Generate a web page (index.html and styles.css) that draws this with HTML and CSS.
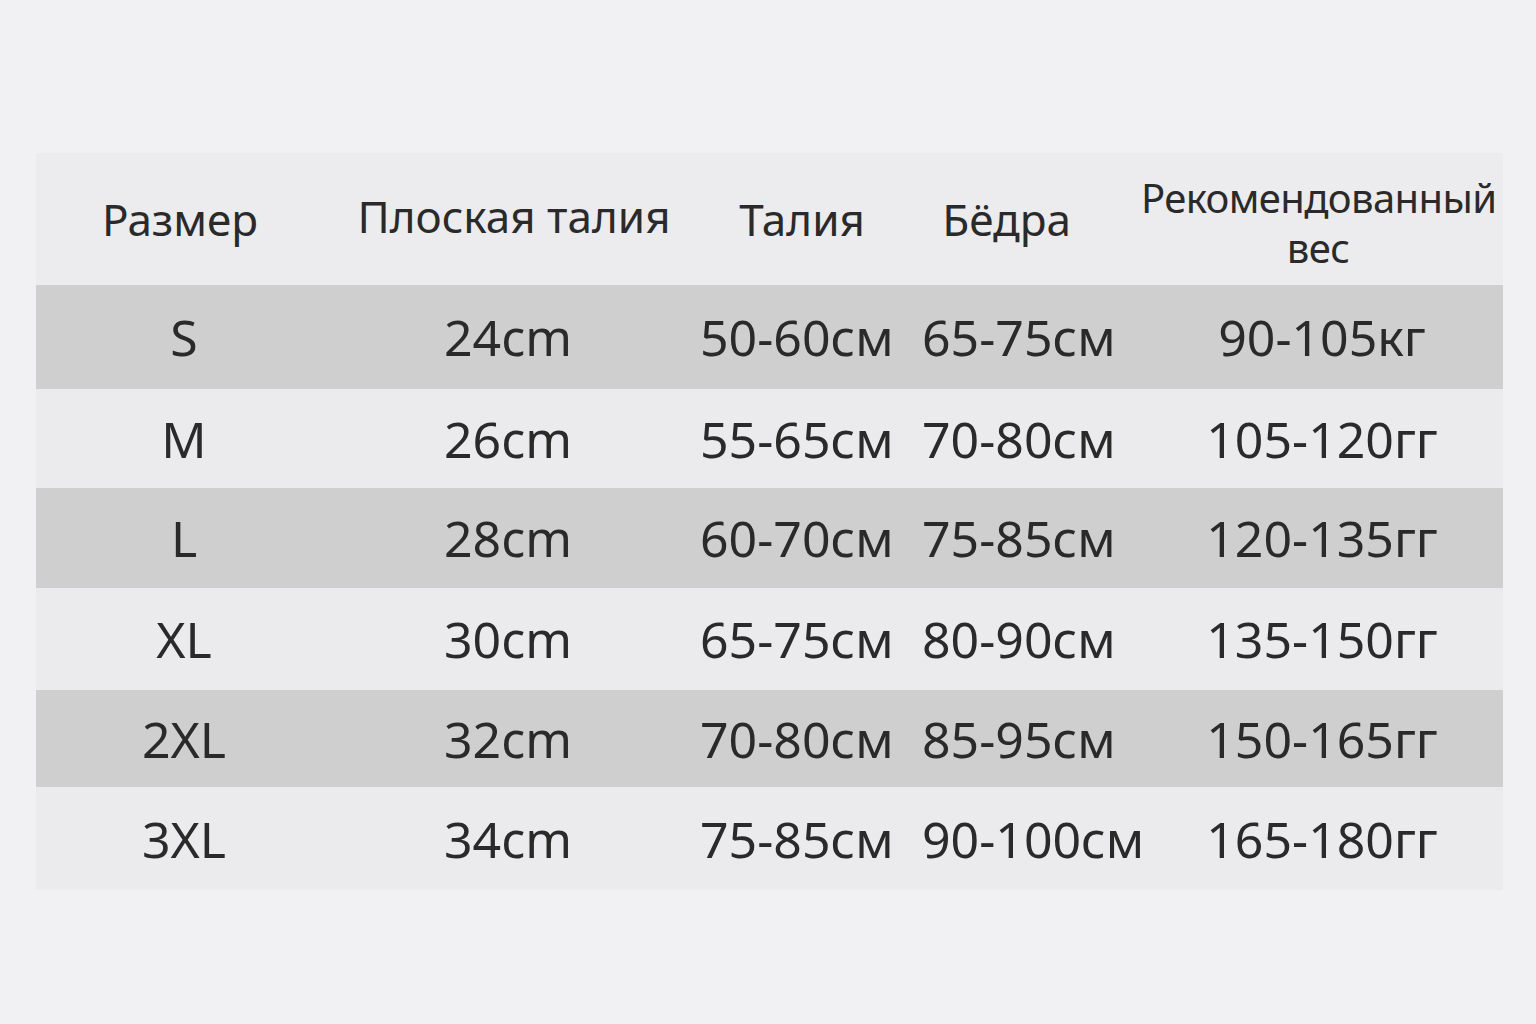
FILE: index.html
```html
<!DOCTYPE html>
<html lang="ru">
<head>
<meta charset="utf-8">
<title>Таблица размеров</title>
<link rel="stylesheet" href="styles.css">
</head>
<body>
<div class="page">
  <div class="chart">
    <div class="row head">
      <div class="c c1">Размер</div>
      <div class="c c2">Плоская талия</div>
      <div class="c c3">Талия</div>
      <div class="c c4">Бёдра</div>
      <div class="c c5">Рекомендованный<br>вес</div>
    </div>
    <div class="row dark r1">
      <div class="c c1">S</div>
      <div class="c c2">24cm</div>
      <div class="c c3">50-60см</div>
      <div class="c c4">65-75см</div>
      <div class="c c5">90-105кг</div>
    </div>
    <div class="row r2">
      <div class="c c1">M</div>
      <div class="c c2">26cm</div>
      <div class="c c3">55-65см</div>
      <div class="c c4">70-80см</div>
      <div class="c c5">105-120гг</div>
    </div>
    <div class="row dark r3">
      <div class="c c1">L</div>
      <div class="c c2">28cm</div>
      <div class="c c3">60-70см</div>
      <div class="c c4">75-85см</div>
      <div class="c c5">120-135гг</div>
    </div>
    <div class="row r4">
      <div class="c c1">XL</div>
      <div class="c c2">30cm</div>
      <div class="c c3">65-75см</div>
      <div class="c c4">80-90см</div>
      <div class="c c5">135-150гг</div>
    </div>
    <div class="row dark r5">
      <div class="c c1">2XL</div>
      <div class="c c2">32cm</div>
      <div class="c c3">70-80см</div>
      <div class="c c4">85-95см</div>
      <div class="c c5">150-165гг</div>
    </div>
    <div class="row r6">
      <div class="c c1">3XL</div>
      <div class="c c2">34cm</div>
      <div class="c c3">75-85см</div>
      <div class="c c4">90-100см</div>
      <div class="c c5">165-180гг</div>
    </div>
  </div>
</div>
</body>
</html>
```
FILE: styles.css
```css
html, body {
  margin: 0;
  padding: 0;
  background: #f1f1f3;
}
body {
  width: 1536px;
  height: 1024px;
  overflow: hidden;
  font-family: "Noto Sans", "Open Sans", sans-serif;
  color: #2a2a2a;
}
.page {
  padding: 153px 33px 0 36px;
}
.chart {
  width: 1467px;
  background: #ebebed;
}
.row {
  display: grid;
  grid-template-columns: 296px 352px 224px 233px 362px;
  align-items: center;
  font-size: 50px;
  line-height: 1;
}
.row.dark {
  background: #cfcfcf;
}
.head {
  height: 132px;
  font-size: 44px;
  line-height: 1.2;
  background: #ececee;
}
.r1 { height: 104px; }
.r2 { height: 99px; }
.r3 { height: 100px; }
.r4 { height: 102px; }
.r5 { height: 97px; }
.r6 { height: 103px; }
.c {
  text-align: center;
  white-space: nowrap;
}
.row .c3 {
  text-align: left;
  padding-left: 16px;
}
.row .c4 {
  text-align: left;
  padding-left: 14px;
}
.head .c1 {
  padding-right: 8px;
}
.head .c2 {
  padding-left: 12px;
  margin-top: -6px;
}
.head .c3 {
  text-align: center;
  padding-left: 12px;
}
.head .c4 {
  text-align: center;
  padding-left: 0;
  padding-right: 36px;
}
.head .c5 {
  font-size: 40px;
  line-height: 50px;
  letter-spacing: -0.6px;
  padding-right: 8px;
  margin-top: 8px;
}
```
